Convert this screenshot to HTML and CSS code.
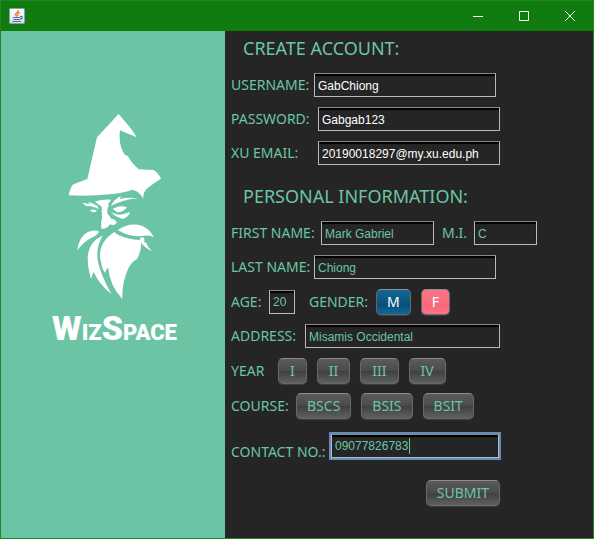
FILE: index.html
```html
<!DOCTYPE html>
<html lang="en">
<head>
<meta charset="utf-8">
<title>WizSpace</title>
<link rel="stylesheet" href="styles.css">
</head>
<body>
<div class="window">
  <header class="titlebar">
    <svg class="app-icon" viewBox="0 0 16 16" aria-hidden="true">
      <defs><linearGradient id="tile" x1="0" y1="0" x2="0" y2="1"><stop offset="0" stop-color="#fff"/><stop offset="1" stop-color="#d5dce8"/></linearGradient></defs>
      <rect x=".5" y=".5" width="15" height="15" rx="1" fill="url(#tile)" stroke="#8b9cb4"/>
      <path d="M9.500 2C10 4.500 5.500 5 6.500 7L8 8.500M11 4.500C8 5.500 8 6.500 9 8" fill="none" stroke="#e6772c" stroke-width="1.200"/>
      <path d="M4 9.500H11M4.500 11.500H10.500M3.500 13.500H12M11 8.500Q14 8 13 10L11 11.500" fill="none" stroke="#49708f" stroke-width="1.200"/>
    </svg>
    <div class="window-controls">
      <button type="button" aria-label="Minimize"><svg viewBox="0 0 10 10"><path d="M0 5.500H10"/></svg></button>
      <button type="button" aria-label="Maximize"><svg viewBox="0 0 10 10"><path d="M.5 .5H9.500V9.500H.5Z"/></svg></button>
      <button type="button" aria-label="Close"><svg viewBox="0 0 10 10"><path d="M0 0L10 10M10 0L0 10"/></svg></button>
    </div>
  </header>
  <div class="content">
    <aside class="brand">
      <svg class="wizard" viewBox="24 27 282 558" aria-hidden="true">
        <path d="M176 27L111 97L82 222Q60 230 38 239Q30 250 26 271Q90 275 150 268Q190 263 218 254Q240 260 250 282Q248 262 262 250Q277 237 303 221Q293 202 281 195L236 193Q215 175 203 153L195 150Q180 130 179 100Q178 86 180 76Q200 85 230 97L214 72Z"/>
        <g transform="translate(0 255)">
          <path d="M66 38L90 42L84 35Q100 40 113 48L116 57Q100 50 88 48L80 49Z"/>
          <path d="M90 61Q100 56 111 62Q105 68 97 66Z"/>
          <path d="M104 35Q128 27 153 29Q151 36 143 42L147 46Q139 60 143 72Q150 78 154 87Q166 86 170 98Q164 108 150 103Q140 118 124 116Q121 100 126 85L125 50Q116 42 104 35Z"/>
          <path d="M153 48Q160 30 182 18L180 27Q200 20 234 25Q200 28 180 36Q165 40 153 48Z"/>
          <path d="M158 57Q178 43 201 52Q190 67 172 67Q165 63 158 57Z"/>
          <path d="M153 66Q175 80 198 70L210 66Q208 80 188 87L180 84Q165 80 153 66Z"/>
          <path d="M52 181Q58 135 90 124Q110 118 117 125Q112 135 95 143Q70 155 52 181Z"/>
          <path d="M173 120Q200 100 235 104Q265 110 282 141Q265 134 245 138Q210 142 173 120Z"/>
          <path d="M128 137Q85 155 83 205Q84 240 93 266L101 245Q115 280 154 312Q125 260 115 220Q105 175 128 137Z"/>
          <path d="M163 126Q118 155 120 200Q125 235 134 248L144 232Q150 290 187 327Q185 280 205 235Q215 215 230 208Q246 185 243 150Q210 150 175 135Z"/>
          <path d="M240 143L250 142Q256 150 252 157L259 158Q262 170 276 183Q255 175 242 157Z"/>
        </g>
      </svg>
      <div class="wordmark"><span class="big">W</span>IZ<span class="big">S</span>PACE</div>
    </aside>
    <form class="form">
      <h1>CREATE ACCOUNT:</h1>
      <div class="row short"><label class="l-user" for="user">USERNAME:</label><input class="light" id="user" value="GabChiong"></div>
      <div class="row"><label class="l-pass" for="pass">PASSWORD:</label><input class="light" id="pass" value="Gabgab123"></div>
      <div class="row"><label class="l-pass" for="email">XU EMAIL:</label><input class="light" id="email" value="20190018297@my.xu.edu.ph"></div>
      <h2>PERSONAL INFORMATION:</h2>
      <div class="row wide"><label class="l-first" for="first">FIRST NAME:</label><input id="first" value="Mark Gabriel"><label class="l-mi" for="mi">M.I.</label><input class="mi" id="mi" value="C"></div>
      <div class="row short"><label class="l-user" for="last">LAST NAME:</label><input id="last" value="Chiong"></div>
      <div class="row tall"><label class="l-age" for="age">AGE:</label><input class="age" id="age" value="20"><span class="l-gender" id="gender">GENDER:</span><div class="choices" role="group" aria-labelledby="gender"><button class="male" type="button">M</button><button class="female" type="button">F</button></div></div>
      <div class="row"><label class="l-address" for="address">ADDRESS:</label><input id="address" value="Misamis Occidental"></div>
      <div class="row tall"><span class="l-year" id="year">YEAR</span><div class="choices years" role="group" aria-labelledby="year"><button type="button">I</button><button type="button">II</button><button type="button">III</button><button type="button">IV</button></div></div>
      <div class="row tall"><span class="l-course" id="course">COURSE:</span><div class="choices" role="group" aria-labelledby="course"><button type="button">BSCS</button><button type="button">BSIS</button><button type="button">BSIT</button></div></div>
      <div class="row contact"><label class="l-contact" for="contact">CONTACT NO.:</label><div class="active-field"><input id="contact" value="09077826783"><span class="caret"></span></div></div>
      <div class="row submit"><button type="submit">SUBMIT</button></div>
    </form>
  </div>
</div>
</body>
</html>
```
FILE: styles.css
```css
* { box-sizing: border-box; }
body {
  margin: 0;
  background: #252525;
  color: #6bc5a4;
  font: 14px/18px "Noto Sans", "DejaVu Sans Condensed", sans-serif;
}
.window {
  min-height: 100vh;
  display: flex;
  flex-direction: column;
  border: 1px solid #23871f;
}
.titlebar {
  height: 30px;
  display: flex;
  align-items: center;
  justify-content: space-between;
  padding-left: 8px;
  background: #107c10;
}
.app-icon { width: 16px; height: 16px; }
.window-controls { display: flex; height: 100%; }
.window-controls button {
  width: 46px;
  height: 100%;
  min-width: 0;
  padding: 0;
  border: 0;
  background: none;
  box-shadow: none;
}
.window-controls svg {
  display: block;
  width: 10px;
  height: 10px;
  margin: auto;
  overflow: visible;
  fill: none;
  stroke: #fff;
}
.content { flex: 1; display: flex; }
.brand {
  flex: 0 0 38%;
  max-width: 224px;
  display: flex;
  flex-direction: column;
  align-items: center;
  padding: 83px 0 0 3px;
  background: #6bc5a4;
  color: #fff;
}
.wizard { width: 94px; height: 186px; fill: #fff; }
.wordmark {
  margin-top: 8px;
  font: 900 22px/40px Roboto, "Liberation Sans", sans-serif;
  white-space: nowrap;
}
.big { font-size: 34px; }
.form { flex: 1; padding: 0 6px; }
h1, h2 {
  margin: 0 12px;
  font-size: 18px;
  line-height: 24px;
  font-weight: normal;
}
h1 { padding: 5px 0 8px; }
h2 { padding: 14px 0 8px; }
.row {
  display: flex;
  align-items: center;
  height: 34px;
  max-width: 269px;
  white-space: nowrap;
}
.short { max-width: 265px; }
.wide { max-width: 306px; }
.tall { height: 35px; }
.row label, .row > span { flex: none; }
.l-user { width: 83px; }
.l-pass { width: 87px; }
.l-first { width: 90px; }
.l-mi { width: 40px; padding-left: 8px; }
.l-age { width: 38px; }
.l-gender { width: 81px; padding-left: 14px; }
.l-address { width: 74px; }
.l-year { width: 47px; }
.l-course { width: 65px; }
.l-contact { width: 98px; padding-top: 12px; }
input {
  flex: 1;
  width: 100%;
  min-width: 0;
  height: 24px;
  padding: 1px 3px 0;
  border: 1px solid #bbb;
  border-top-color: #888;
  border-radius: 0;
  outline: 0;
  background: transparent;
  box-shadow: inset 0 2px 1px #000;
  color: #6bc5a4;
  font: 12px/18px "Liberation Sans", sans-serif;
}
.light { color: #fff; }
.row .mi { flex: 0 0 63px; }
.row .age { flex: 0 0 26px; }
.choices { display: flex; gap: 10px; }
button {
  height: 26px;
  padding: 0 10px;
  border: 1px solid #68686a;
  border-top-color: #8c8c8e;
  border-radius: 5px;
  background: linear-gradient(#5b5b5b, #4b4b4b 48%, #404040 52%, #606062);
  box-shadow: 0 1px 1px #414141;
  color: #6bc5a4;
  font: inherit;
}
.years button { padding: 0 11px; }
.male { background: linear-gradient(#146596, #0b567d 50%, #075078 60%, #0d689c); color: #fff; }
.female { background: linear-gradient(#ff7487, #fa6e81 50%, #f7677b 60%, #ff7588); color: #fff; }
.contact { height: 45px; max-width: 270px; }
.active-field {
  position: relative;
  flex: 1;
  display: flex;
  border: 2px solid #608cba;
}
.caret {
  position: absolute;
  left: 78px;
  top: 4px;
  width: 1px;
  height: 16px;
  background: #6bc5a4;
}
.submit { height: 50px; justify-content: flex-end; }
```
